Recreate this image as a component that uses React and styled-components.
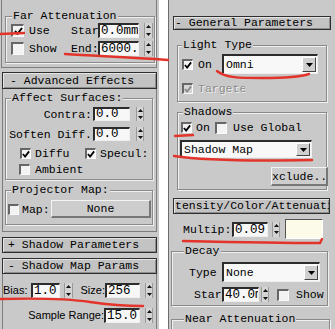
import React from 'react';
import styled, { createGlobalStyle } from 'styled-components';

const MONO = `"Liberation Mono", "DejaVu Sans Mono", monospace`;
const SANS = `"Liberation Sans", Arial, sans-serif`;
const BG = '#c9c9c9';

const GlobalStyle = createGlobalStyle`
  html, body { margin: 0; padding: 0; background: #fff; }
  body { width: 335px; height: 329px; overflow: hidden; }
`;

const Page = styled.div`
  position: relative;
  width: 335px;
  height: 329px;
  display: flex;
  background: #fff;
  font-family: ${MONO};
  font-size: 11.5px;
  color: #000;
  overflow: hidden;
`;

const Column = styled.div`
  box-sizing: border-box;
  width: ${p => p.$w}px;
  margin-left: ${p => p.$ml || 0}px;
  height: 329px;
  background: ${BG};
  display: flex;
  flex-direction: column;
  overflow: hidden;
  border-left: ${p => (p.$frame ? '1px solid #6c6c6c' : 'none')};
  flex-shrink: 0;
`;

const Rollout = styled.div`
  box-sizing: border-box;
  flex-shrink: 0;
  display: flex;
  flex-direction: column;
  margin: ${p => p.$mt || 0}px 0 0 ${p => p.$ml}px;
  width: ${p => p.$w}px;
  height: ${p => p.$h}px;
  border: 1px solid #7d7d7d;
  border-top: none;
  border-bottom: ${p => (p.$open ? 'none' : '1px solid #7d7d7d')};
`;

const Header = styled.div`
  box-sizing: border-box;
  flex-shrink: 0;
  margin: ${p => p.$mt}px 0 0 ${p => p.$ml}px;
  width: ${p => p.$w}px;
  height: ${p => p.$h}px;
  border: 1px solid #2e2e2e;
  background: #c3c3c3;
  box-shadow: inset 1px 1px 0 #e4e4e4, inset -1px -1px 0 #8e8e8e;
  padding-left: ${p => p.$pl}px;
  line-height: ${p => p.$h - 2}px;
  white-space: nowrap;
  overflow: hidden;
`;

const Group = styled.fieldset`
  box-sizing: border-box;
  flex-shrink: 0;
  margin: ${p => p.$mt}px 0 0 ${p => p.$ml}px;
  width: ${p => p.$w}px;
  min-width: 0;
  padding: 0 0 ${p => p.$pb || 0}px 0;
  border: 1px solid #8a8a8a;
  box-shadow: inset 1px 1px 0 #f0f0f0, 1px 1px 0 #f0f0f0;
  display: flex;
  flex-direction: column;
`;

const Legend = styled.legend`
  margin-left: ${p => p.$ml}px;
  padding: 0 1px;
  height: 12px;
  line-height: 12px;
  background: ${BG};
  white-space: nowrap;
`;

const Row = styled.div`
  display: flex;
  align-items: center;
  flex-shrink: 0;
  height: ${p => p.$h}px;
  margin-top: ${p => p.$mt || 0}px;
  white-space: nowrap;
`;

const Text = styled.span`
  display: block;
  flex-shrink: 0;
  width: ${p => (p.$w ? `${p.$w}px` : 'auto')};
  margin-left: ${p => p.$ml || 0}px;
  text-align: ${p => (p.$right ? 'right' : 'left')};
  overflow: hidden;
  color: ${p => (p.$dim ? '#8c8c8c' : '#000')};
  text-shadow: ${p => (p.$dim ? '1px 1px 0 #efefef' : 'none')};
  font-family: ${p => (p.$sans ? SANS : MONO)};
  font-size: ${p => (p.$sans ? '11px' : '11.5px')};
  line-height: 13px;
`;

const Box = styled.span`
  display: flex;
  align-items: center;
  justify-content: center;
  flex-shrink: 0;
  box-sizing: border-box;
  width: ${p => p.$s || 12}px;
  height: ${p => p.$s || 12}px;
  margin-left: ${p => p.$ml || 0}px;
  background: ${p => (p.$dim ? '#d6d6d6' : '#f3f3f3')};
  border-top: 2px solid #666;
  border-left: 2px solid #666;
  border-right: 1px solid #fafafa;
  border-bottom: 1px solid #fafafa;
`;

const Field = styled.span`
  display: block;
  flex-shrink: 0;
  box-sizing: border-box;
  width: ${p => p.$w}px;
  height: ${p => p.$h || 15}px;
  margin-left: ${p => p.$ml || 0}px;
  background: #f7f7f7;
  border-top: 2px solid #2c2c2c;
  border-left: 2px solid #2c2c2c;
  border-right: 1px solid #efefef;
  border-bottom: 1px solid #efefef;
  padding-left: 1px;
  line-height: ${p => (p.$h || 15) - 3}px;
  font-size: 12.5px;
  overflow: hidden;
  white-space: nowrap;
`;

const SpinBox = styled.span`
  display: flex;
  flex-direction: column;
  justify-content: space-around;
  align-items: center;
  flex-shrink: 0;
  box-sizing: border-box;
  width: ${p => p.$w || 8}px;
  height: ${p => p.$h || 15}px;
  margin-left: ${p => p.$ml || 0}px;
  background: #d4d4d4;
  border-left: 1px solid #9a9a9a;
  border-right: 1px solid #9a9a9a;
`;

const Select = styled.span`
  display: flex;
  align-items: center;
  flex-shrink: 0;
  box-sizing: border-box;
  width: ${p => p.$w}px;
  height: ${p => p.$h}px;
  margin-left: ${p => p.$ml || 0}px;
  background: #f8f8f8;
  border-top: 2px solid #2c2c2c;
  border-left: 2px solid #2c2c2c;
  border-right: 1px solid #efefef;
  border-bottom: 1px solid #efefef;
`;

const SelectText = styled.span`
  flex: 1;
  padding-left: 2px;
  line-height: 14px;
  overflow: hidden;
  white-space: nowrap;
`;

const DropButton = styled.span`
  display: flex;
  align-items: center;
  justify-content: center;
  box-sizing: border-box;
  width: 14px;
  height: calc(100% - 2px);
  margin-right: 1px;
  background: #cfcfcf;
  border-top: 1px solid #fff;
  border-left: 1px solid #fff;
  border-right: 1px solid #444;
  border-bottom: 1px solid #444;
`;

const PushButton = styled.span`
  display: flex;
  align-items: center;
  justify-content: ${p => (p.$left ? 'flex-start' : 'center')};
  flex-shrink: 0;
  box-sizing: border-box;
  width: ${p => p.$w}px;
  height: ${p => p.$h}px;
  margin-left: ${p => p.$ml || 0}px;
  background: #cdcdcd;
  border-top: 1px solid #f4f4f4;
  border-left: 1px solid #f4f4f4;
  border-right: 2px solid #777;
  border-bottom: 2px solid #777;
  overflow: hidden;
  white-space: nowrap;
`;

const Swatch = styled.span`
  display: block;
  flex-shrink: 0;
  box-sizing: border-box;
  width: ${p => p.$w}px;
  height: ${p => p.$h}px;
  margin-left: ${p => p.$ml || 0}px;
  background: #fcfae9;
  border-top: 1px solid #555;
  border-left: 1px solid #555;
  border-right: 1px solid #fff;
  border-bottom: 1px solid #fff;
`;

const Marks = styled.svg`
  position: absolute;
  left: 0;
  top: 0;
  width: 335px;
  height: 329px;
  pointer-events: none;
`;

const Check = ({ ml, s, on, dim }) => (
  <Box $ml={ml} $s={s} $dim={dim}>
    {on && (
      <svg width="9" height="8" viewBox="0 0 9 8">
        <path d="M1 4 L3.5 6.8 L8 1" fill="none" stroke={dim ? '#8a8a8a' : '#000'} strokeWidth="2" />
      </svg>
    )}
  </Box>
);

const Spinner = ({ ml, w, h }) => (
  <SpinBox $ml={ml} $w={w} $h={h}>
    <svg width="5" height="3" viewBox="0 0 5 3"><path d="M0 3 L2.5 0 L5 3 Z" fill="#111" /></svg>
    <svg width="5" height="3" viewBox="0 0 5 3"><path d="M0 0 L2.5 3 L5 0 Z" fill="#111" /></svg>
  </SpinBox>
);

const Dropdown = ({ ml, w, h, children }) => (
  <Select $ml={ml} $w={w} $h={h}>
    <SelectText>{children}</SelectText>
    <DropButton>
      <svg width="7" height="4" viewBox="0 0 7 4"><path d="M0 0 L7 0 L3.5 4 Z" fill="#000" /></svg>
    </DropButton>
  </Select>
);

export default function App() {
  return (
    <>
      <GlobalStyle />
      <Page>
        <Column $w={159}>
          <Rollout $ml={1} $w={156} $h={68}>
            <Group $mt={10} $ml={3} $w={150} $pb={6}>
              <Legend $ml={6}>Far Attenuation</Legend>
              <Row $h={15} $mt={1}>
                <Check ml={5} s={13} on />
                <Text $ml={5} $w={37}>Use</Text>
                <Text $ml={5} $w={27}>Star</Text>
                <Field $w={41}>0.0mm</Field>
                <Spinner ml={5} w={9} />
              </Row>
              <Row $h={15} $mt={3}>
                <Check ml={5} s={13} />
                <Text $ml={5} $w={37}>Show</Text>
                <Text $ml={5} $w={27}>End:</Text>
                <Field $w={41}>6000.0mm</Field>
                <Spinner ml={5} w={9} />
              </Row>
            </Group>
          </Rollout>

          <Header $mt={4} $ml={2} $w={155} $h={17} $pl={7}>- Advanced Effects</Header>
          <Rollout $ml={2} $w={155} $h={143}>
            <Group $mt={3} $ml={2} $w={148} $pb={4}>
              <Legend $ml={5}>Affect Surfaces:</Legend>
              <Row $h={14} $mt={3}>
                <Text $w={86} $right>Contra:</Text>
                <Field $ml={1} $w={37} $h={14}>0.0</Field>
                <Spinner ml={6} w={8} h={14} />
              </Row>
              <Row $h={14} $mt={6}>
                <Text $w={86} $right>Soften Diff.</Text>
                <Field $ml={1} $w={37} $h={14}>0.0</Field>
                <Spinner ml={6} w={8} h={14} />
              </Row>
              <Row $h={12} $mt={6}>
                <Check ml={14} s={11} on />
                <Text $ml={4} $w={45}>Diffu</Text>
                <Check ml={5} s={11} on />
                <Text $ml={4} $w={48}>Specul:</Text>
              </Row>
              <Row $h={12} $mt={4}>
                <Check ml={13} s={11} />
                <Text $ml={5}>Ambient</Text>
              </Row>
            </Group>
            <Group $mt={4} $ml={2} $w={148} $pb={6}>
              <Legend $ml={5}>Projector Map:</Legend>
              <Row $h={18} $mt={4}>
                <Check ml={2} s={11} />
                <Text $ml={3} $w={28}>Map:</Text>
                <PushButton $ml={1} $w={100} $h={18}>None</PushButton>
              </Row>
            </Group>
          </Rollout>

          <Header $mt={5} $ml={2} $w={155} $h={16} $pl={5}>+ Shadow Parameters</Header>
          <Header $mt={5} $ml={2} $w={155} $h={16} $pl={5}>- Shadow Map Params</Header>
          <Rollout $ml={2} $w={155} $h={60} $open>
            <Row $h={15} $mt={9}>
              <Text $w={28} $sans>Bias:</Text>
              <Field $w={29}>1.0</Field>
              <Spinner ml={4} w={9} />
              <Text $ml={6} $w={26} $sans $right>Size:</Text>
              <Field $w={35}>256</Field>
              <Spinner ml={5} w={8} />
            </Row>
            <Row $h={15} $mt={10}>
              <Text $w={101} $sans $right>Sample Range:</Text>
              <Field $w={36}>15.0</Field>
              <Spinner ml={5} w={8} />
            </Row>
          </Rollout>
        </Column>

        <Column $w={167} $ml={9} $frame>
          <Header $mt={16} $ml={4} $w={158} $h={14} $pl={1}>- General Parameters</Header>
          <Group $mt={9} $ml={8} $w={150} $pb={7}>
            <Legend $ml={4}>Light Type</Legend>
            <Row $h={20} $mt={3}>
              <Check ml={4} s={11} on />
              <Text $ml={5} $w={24}>On</Text>
              <Dropdown w={96} h={20}>Omni</Dropdown>
            </Row>
            <Row $h={11} $mt={9}>
              <Check ml={4} s={11} on dim />
              <Text $ml={5} $w={47} $dim>Targeted</Text>
            </Row>
          </Group>
          <Group $mt={4} $ml={8} $w={150} $pb={3}>
            <Legend $ml={5}>Shadows</Legend>
            <Row $h={13} $mt={3}>
              <Check ml={3} s={11} on />
              <Text $ml={4} $w={17}>On</Text>
              <Check ml={2} s={12} />
              <Text $ml={6}>Use Global</Text>
            </Row>
            <Row $h={18} $mt={6}>
              <Dropdown ml={2} w={132} h={18}>Shadow Map</Dropdown>
            </Row>
            <Row $h={19} $mt={9}>
              <PushButton $ml={93} $w={57} $h={19} $left>xclude..</PushButton>
            </Row>
          </Group>
          <Header $mt={8} $ml={4} $w={157} $h={16} $pl={1}>tensity/Color/Attenuation</Header>
          <Row $h={20} $mt={5}>
            <Text $ml={14} $w={48}>Multip:</Text>
            <Field $ml={1} $w={36}>0.09</Field>
            <Spinner ml={4} w={8} />
            <Swatch $ml={5} $w={38} $h={20} />
          </Row>
          <Group $mt={6} $ml={2} $w={157} $pb={3}>
            <Legend $ml={12}>Decay</Legend>
            <Row $h={20} $mt={5}>
              <Text $ml={17} $w={33}>Type</Text>
              <Dropdown w={98} h={20}>None</Dropdown>
            </Row>
            <Row $h={15} $mt={5}>
              <Text $ml={22} $w={28}>Star</Text>
              <Field $w={37}>40.0mm</Field>
              <Spinner ml={2} w={8} />
              <Check ml={8} s={12} />
              <Text $ml={7}>Show</Text>
            </Row>
          </Group>
          <Group $mt={7} $ml={2} $w={159} $pb={20}>
            <Legend $ml={12}>Near Attenuation</Legend>
          </Group>
        </Column>

        <Marks viewBox="0 0 335 329">
          <g fill="none" stroke="#e3342b" strokeWidth="2.4" strokeLinecap="round">
            <path d="M0 34 L24 33" />
            <path d="M65 54 C 95 56, 125 57, 168 60" />
            <path d="M0 299 C 40 298, 70 299, 90 302 S 130 306, 143 306" />
            <path d="M217 71 C 225 78, 240 78, 262 78 S 300 77, 309 74" />
            <path d="M175 136 L193 135" />
            <path d="M174 156 C 200 160, 260 161, 312 160" />
            <path d="M183 241 C 230 242, 280 243, 320 243 L 322 239" />
          </g>
        </Marks>
      </Page>
    </>
  );
}
